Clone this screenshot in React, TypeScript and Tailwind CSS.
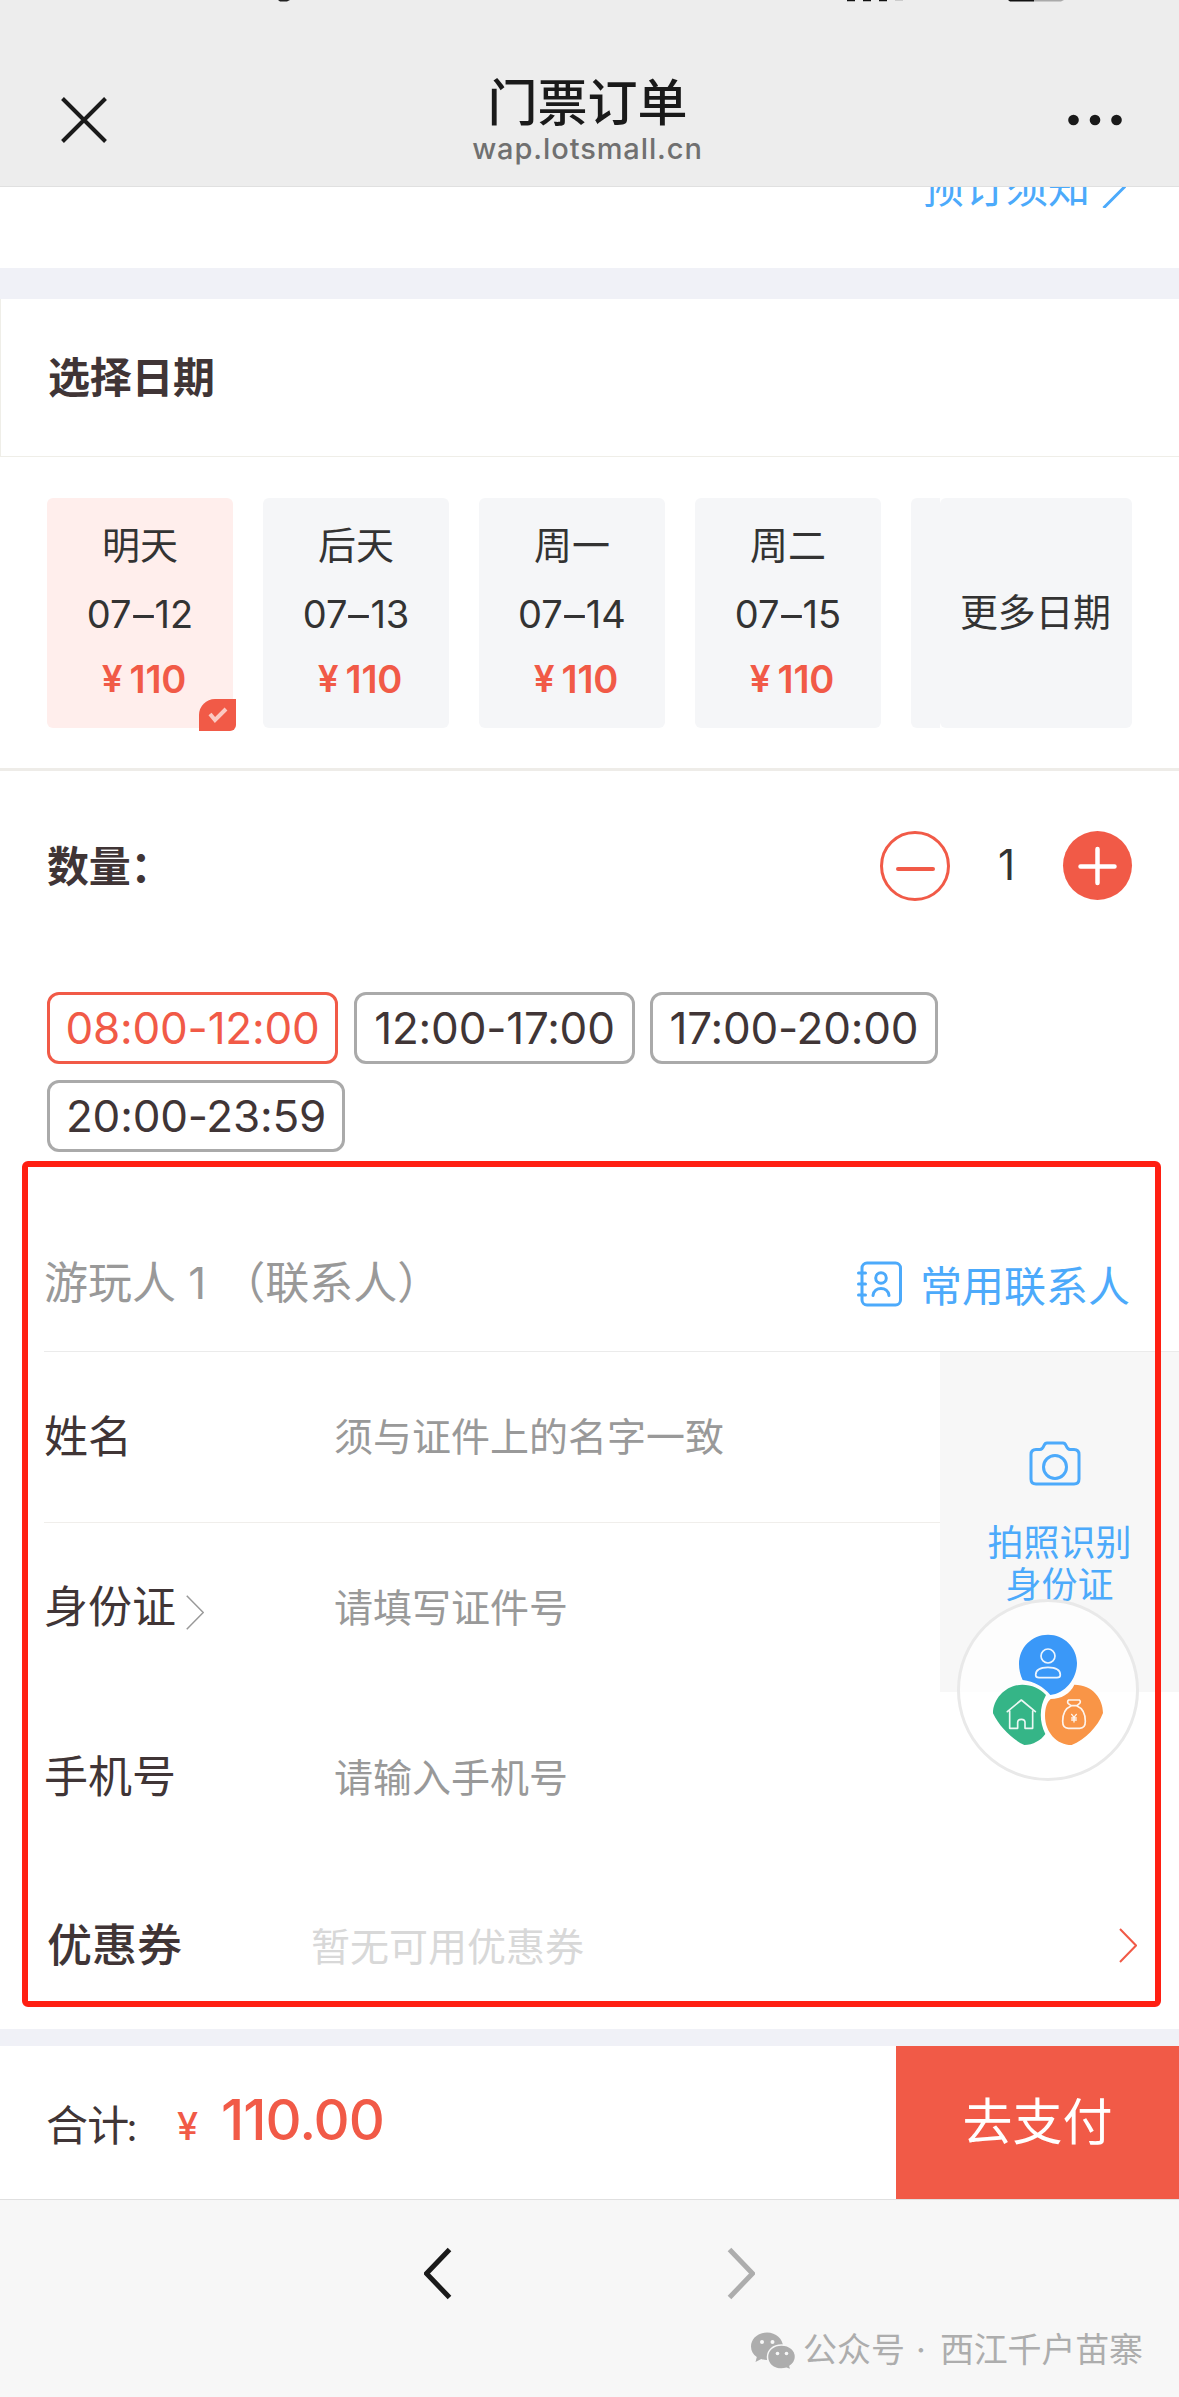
import React from "react";

const BLUE = "#4caafb";

function Chevron({ w, h, color, stroke, left = false }: { w: number; h: number; color: string; stroke: number; left?: boolean }) {
  const o = stroke / 2;
  const d = left ? `M${w - o} ${o}L${o} ${h / 2}L${w - o} ${h - o}` : `M${o} ${o}L${w - o} ${h / 2}L${o} ${h - o}`;
  return (
    <svg width={w} height={h} viewBox={`0 0 ${w} ${h}`} fill="none" stroke={color} strokeWidth={stroke} className="shrink-0">
      <path d={d} />
    </svg>
  );
}

function StatusSliver() {
  return (
    <svg width="1179" height="2" viewBox="0 0 1179 2" className="absolute left-0 top-0">
      <path d="M278 0h12l-3 1.500h-7z" fill="#222" />
      <path d="M847 0h8v1.200h-8zM863 0h8v1.200h-8zM879 0h8v1.200h-8z" fill="#111" />
      <path d="M895 0h8v1h-8z" fill="#ccc" />
      <path d="M1008 0h26v1.500h-24z" fill="#111" />
      <path d="M1034 0h30l-3 1.500h-27z" fill="#aaa" />
    </svg>
  );
}

function Header() {
  return (
    <header className="relative flex h-[187px] items-start justify-between border-b border-[#e0e0e0] bg-[#ededed] px-[57px]">
      <StatusSliver />
      <svg width="54" height="54" viewBox="0 0 54 54" fill="none" stroke="#1a1a1a" strokeWidth="4" className="mt-[93px]">
        <path d="M5.5 5.5L48.5 48.5M48.5 5.5L5.5 48.5" />
      </svg>
      <div className="flex flex-col items-center pr-[4px] pt-[76px]">
        <h1 className="text-[50px] font-medium leading-[54px] text-[#1a1a1a]">门票订单</h1>
        <p className="mt-[2px] text-[29px] font-medium leading-[34px] tracking-[0.9px] text-[#707070]">wap.lotsmall.cn</p>
      </div>
      <svg width="54" height="12" viewBox="0 0 54 12" fill="#1a1a1a" className="mt-[114px]">
        <circle cx="5.5" cy="6" r="5.3" />
        <circle cx="27" cy="6" r="5.3" />
        <circle cx="48.5" cy="6" r="5.3" />
      </svg>
    </header>
  );
}

function BookingNotice() {
  return (
    <div className="flex h-[81px] items-start justify-end overflow-hidden bg-white pr-[53px] text-[#4caafb]">
      <span className="-mt-[20px] text-[42px] leading-[42px]">预订须知</span>
      <svg width="24" height="42" viewBox="0 0 24 42" fill="none" stroke={BLUE} strokeWidth="3" className="-mt-[21px] ml-[12px]">
        <path d="M1.5 0L22.5 21L1.5 42" />
      </svg>
    </div>
  );
}

function DateCard({ day, date, active = false }: { day: string; date: string; active?: boolean }) {
  return (
    <div className={`relative flex h-[230px] w-[186px] flex-col items-center rounded-[6px] text-[38px] leading-[38px] text-[#333] ${active ? "bg-[#ffeeec]" : "bg-[#f5f6f8]"}`}>
      <span className="mt-[28px]">{day}</span>
      <span className="mt-[31px] flex">
        07<span className="inline-block origin-center scale-x-110 px-[2px]">–</span>
        {date}
      </span>
      <span className="mt-[27px] flex pl-[8px] font-semibold tracking-[-0.2px] text-[#f15a47]">
        <span className="mr-[7px] text-[37px]">¥</span>110
      </span>
      {active && (
        <span className="absolute -bottom-[3px] -right-[3px] flex h-[32px] w-[37px] items-center justify-center rounded-br-[6px] rounded-tl-[16px] bg-[#f15a47]">
          <svg width="20" height="17" viewBox="0 0 20 17" fill="none" stroke="#fbc9c2" strokeWidth="4">
            <path d="M2 7L7 13L18 2" />
          </svg>
        </span>
      )}
    </div>
  );
}

function DateSection() {
  return (
    <section>
      <div className="flex h-[158px] items-center border-b border-l border-[#efeee8] pl-[47px]">
        <h2 className="text-[42px] font-bold leading-[42px] tracking-[-0.3px] text-[#403536]">选择日期</h2>
      </div>
      <div className="flex h-[314px] items-start gap-[30px] border-b-[3px] border-[#eeece8] pl-[47px] pt-[41px]">
        <DateCard day="明天" date="12" active />
        <DateCard day="后天" date="13" />
        <DateCard day="周一" date="14" />
        <DateCard day="周二" date="15" />
        <div className="flex h-[230px] w-[221px]">
          <div className="w-[29px] rounded-l-[6px] bg-[#f5f6f8]" />
          <div className="flex w-[192px] items-center rounded-[6px] bg-[#f5f6f8] pb-[3px] pl-[20px] text-[38px] leading-[38px] tracking-[-0.3px] text-[#333]">更多日期</div>
        </div>
      </div>
    </section>
  );
}

function QuantityRow() {
  return (
    <div className="flex h-[221px] items-start justify-between pl-[47px] pr-[47px] pt-[60px]">
      <span className="mt-[15px] text-[42px] font-bold leading-[42px] tracking-[-0.3px] text-[#403536]">数量：</span>
      <div className="flex items-start">
        <button className="flex size-[70px] items-center justify-center rounded-full border-[3px] border-[#f15a47]">
          <span className="mt-[6px] h-[4px] w-[39px] rounded-full bg-[#f15a47]" />
        </button>
        <span className="mt-[4px] w-[113px] text-center text-[42px] leading-[60px] text-[#333]">1</span>
        <button className="flex size-[69px] items-center justify-center rounded-full bg-[#f15a47]">
          <svg width="40" height="40" viewBox="0 0 40 40" stroke="#fff" strokeWidth="4.5" strokeLinecap="round">
            <path d="M2.500 20.5H36.500M19.500 3V37" />
          </svg>
        </button>
      </div>
    </div>
  );
}

const chip = "flex h-[72px] items-center justify-center rounded-[12px] border-[3px] text-[44px] leading-[44px] tracking-[-0.2px]";

function TimeSlots() {
  return (
    <div className="flex flex-wrap gap-x-[16px] gap-y-[16px] pl-[47px] text-[#403536]">
      <span className={`${chip} w-[291px] border-[#f15a47] text-[#f15a47]`}>08:00-12:00</span>
      <span className={`${chip} w-[281px] border-[#aaa]`}>12:00-17:00</span>
      <span className={`${chip} -ml-px w-[288px] border-[#aaa]`}>17:00-20:00</span>
      <span className={`${chip} w-[298px] border-[#aaa]`}>20:00-23:59</span>
    </div>
  );
}

function ContactBookIcon() {
  return (
    <svg width="45" height="46" viewBox="0 0 45 46" fill="none" stroke={BLUE} strokeWidth="3" strokeLinecap="round">
      <rect x="5" y="2" width="38.5" height="42" rx="5" />
      <path d="M1.5 12H8.500M1.500 23H8.500M1.500 34H8.500" />
      <circle cx="24" cy="17" r="5.300" />
      <path d="M16 34.500C17 25 31 25 32 34.500" />
    </svg>
  );
}

function CameraIcon() {
  return (
    <svg width="52" height="46" viewBox="0 0 52 46" fill="none" stroke={BLUE} strokeWidth="3" strokeLinejoin="round" className="mr-[9px]">
      <path d="M7 8.500H11C13 8.500 14 7 15 4.500C15.800 2.500 16.300 2 18 2H34C35.700 2 36.200 2.500 37 4.500C38 7 39 8.500 41 8.500H45C48.500 8.500 50 10.500 50 13.500V38C50 41.500 48.500 43 45 43H7C3.500 43 2 41.500 2 38V13.500C2 10.500 3.500 8.500 7 8.500Z" />
      <circle cx="26" cy="26" r="11.500" />
    </svg>
  );
}

function FloatingMenu() {
  return (
    <div className="absolute left-[957px] top-[439px] size-[182px] rounded-full border-[3px] border-[#e9e9e9] bg-white/75">
      <svg width="182" height="182" viewBox="0 0 546 546" fill="none" className="-ml-[3px] -mt-[3px]">
        <path d="M196 257C150 257 108 296 108 343C128 384 164 420 202 438C228 438 252 424 265 405C245 364 248 322 267 288C250 268 224 257 196 257Z" fill="#35b587" />
        <path d="M352 257C408 257 438 300 438 342C422 384 384 422 344 438C300 438 264 400 264 350C264 325 271 308 281 300C312 300 340 284 352 257Z" fill="#f99547" />
        <path d="M273 107C322 107 360 146 360 192C360 242 322 284 280 288C260 264 232 247 197 243C190 228 186 212 186 195C186 146 224 107 273 107Z" fill="#3a98f8" />
        <g stroke="#fff" strokeWidth="5" strokeLinejoin="round" strokeLinecap="round" opacity="0.9">
          <circle cx="273" cy="171" r="21" />
          <path d="M236 228C236 210 252 205 273 205S310 210 310 228C310 234 306 236 300 236H246C240 236 236 234 236 228Z" />
          <path d="M151 338L193 303L235 338M158 336V388H182V370C182 358 204 358 204 370V388H227V336" />
          <path d="M335 303H367C371 306 371 311 367 314L360 320H342L334 314C331 310 331 306 335 303ZM342 321C325 328 317 347 317 367C317 382 323 388 334 388H368C380 388 385 382 385 367C385 347 377 328 360 321" />
          <path d="M344 346L351 355L358 346M351 355V369M344 357H358M344 363H358" strokeWidth="4" />
        </g>
      </svg>
    </div>
  );
}

const label = "w-[290px] shrink-0 text-[44px] leading-[44px] text-[#403536]";
const hint = "text-[39px] leading-[39px] text-[#999]";

function VisitorForm() {
  return (
    <section className="relative h-[869px]">
      <div className="ml-[44px] flex h-[192px] items-end border-b border-[#ebebeb] pb-[45px] pr-[49px]">
        <span className="mb-px flex-1 text-[44px] leading-[44px] text-[#999]">
          游玩人 1<span className="ml-[15px]">（联系人）</span>
        </span>
        <span className="-mb-px">
          <ContactBookIcon />
        </span>
        <span className="-mb-[2px] ml-[18px] text-[42px] leading-[42px] text-[#4caafb]">常用联系人</span>
      </div>
      <div className="flex h-[340px]">
        <div className="ml-[44px] w-[896px]">
          <div className="flex h-[171px] items-center border-b border-[#f0eeeb]">
            <span className={label}>姓名</span>
            <span className={`${hint} -mt-[2px]`}>须与证件上的名字一致</span>
          </div>
          <div className="flex h-[169px] items-center">
            <span className={`${label} -mt-[2px] flex items-center gap-[10px]`}>
              身份证
              <span className="mt-[12px]">
                <Chevron w={18} h={35} color="#999" stroke={1.5} />
              </span>
            </span>
            <span className={hint}>请填写证件号</span>
          </div>
        </div>
        <div className="flex w-[239px] flex-col items-center bg-[#f7f7f7] pt-[89px]">
          <CameraIcon />
          <p className="mt-[35px] text-center text-[36px] leading-[42px] text-[#4caafb]">
            拍照识别
            <br />
            身份证
          </p>
        </div>
      </div>
      <div className="ml-[44px] flex h-[168px] items-center pt-[2px]">
        <span className={label}>手机号</span>
        <span className={hint}>请输入手机号</span>
      </div>
      <div className="ml-[47px] mr-[42px] flex h-[169px] items-center pt-px">
        <span className="w-[264px] text-[45px] font-medium leading-[45px] text-[#403536]">优惠券</span>
        <span className="mt-[3px] flex-1 text-[39px] leading-[39px] text-[#d8d8d8]">暂无可用优惠券</span>
        <Chevron w={18} h={35} color="#f15a47" stroke={2} />
      </div>
      <FloatingMenu />
      <div className="pointer-events-none absolute left-[22px] top-px h-[846px] w-[1139px] rounded-[6px] border-[6px] border-[#ff1f12]" />
    </section>
  );
}

function PayBar() {
  return (
    <div className="flex h-[154px] border-b border-[#e0e0e0] bg-white">
      <div className="flex flex-1 items-start pl-[46px] text-[#f15a47]">
        <span className="mt-[59px] w-[131px] text-[42px] leading-[42px] tracking-[-0.8px] text-[#403536]">
          合计<span className="-ml-[2px] text-[38px]">:</span>
        </span>
        <span className="mt-[61px] w-[44px] text-[38px] font-medium leading-[38px]">¥</span>
        <span className="mt-[46px] text-[56px] font-medium leading-[56px] tracking-[-1px]">110.00</span>
      </div>
      <button className="flex w-[283px] items-center justify-center bg-[#f15a47] pb-[2px] text-[50px] leading-[50px] text-white">去支付</button>
    </div>
  );
}

function BottomNav() {
  return (
    <footer className="h-[197px] bg-[#f7f7f7]">
      <div className="flex pl-[424px] pt-[47px]">
        <Chevron w={28} h={53} color="#1a1a1a" stroke={5} left />
        <div className="w-[275px]" />
        <Chevron w={28} h={53} color="#adadad" stroke={5} />
      </div>
      <div className="mt-[32px] flex items-start pl-[750px] text-[34px] leading-[36px] text-[#adadad]">
        <svg width="46" height="38" viewBox="0 0 46 38" className="mr-[7px]">
          <path d="M17 0.500C7.500 0.500 1 7 1 14.500C1 19 3.200 22.500 6.800 25L5.500 30L11.200 27C13 27.600 15 28 17 28C26.500 28 33 22 33 14.500C33 7 26 0.500 17 0.500Z" fill="#adadad" />
          <path d="M31.500 13C23 13 17.500 18.500 17.500 25S23 37 31.500 37C33.300 37 35 36.700 36.600 36.200L41 38L40 34.200C43 32 45.500 29 45.500 25C45.500 18.500 40 13 31.500 13Z" fill="#adadad" stroke="#f7f7f7" strokeWidth="1.500" />
          <g fill="#f7f7f7">
            <circle cx="12" cy="10" r="2" />
            <circle cx="22.500" cy="10" r="2" />
            <circle cx="27.500" cy="21.500" r="1.800" />
            <circle cx="36.500" cy="21.500" r="1.800" />
          </g>
        </svg>
        <span>公众号</span>
        <span className="w-[35px] pr-[3px] text-center">·</span>
        <span className="tracking-[-0.2px]">西江千户苗寨</span>
      </div>
    </footer>
  );
}

export default function App() {
  return (
    <div lang="zh-CN" className="w-[1179px] overflow-hidden bg-white font-['Inter','Noto_Sans_CJK_SC',sans-serif]">
      <Header />
      <BookingNotice />
      <div className="h-[31px] bg-[#f0f1f7]" />
      <DateSection />
      <QuantityRow />
      <div className="h-[168px]">
        <TimeSlots />
      </div>
      <VisitorForm />
      <div className="h-[17px] bg-[#f0f1f7]" />
      <PayBar />
      <BottomNav />
    </div>
  );
}
